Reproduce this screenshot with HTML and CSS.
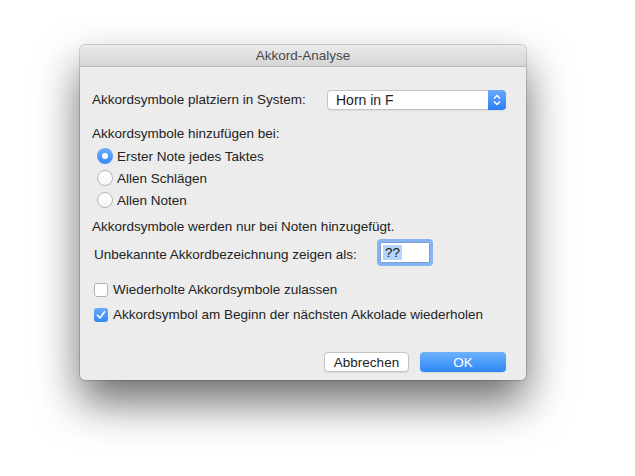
FILE: index.html
```html
<!DOCTYPE html>
<html lang="de">
<head>
    <meta charset="UTF-8">
    <title>Akkord-Analyse</title>
    <link rel="stylesheet" href="styles.css">
</head>
<body>
<div class="desk">
    <div class="win">
        <div class="titlebar">Akkord-Analyse</div>
        <div class="body">
            <div class="row row-system">
                <span>Akkordsymbole platziern in System:</span>
                <div class="popup">
                    <span class="popup-text">Horn in F</span>
                    <span class="stepper">
                        <svg width="10" height="14" viewBox="0 0 10 14">
                            <path d="M2 5.5 L5 2.5 L8 5.5 M2 8.5 L5 11.5 L8 8.5" fill="none" stroke="#fff" stroke-width="1.5"/>
                        </svg>
                    </span>
                </div>
            </div>

            <div class="line line-head">Akkordsymbole hinzufügen bei:</div>
            <ul class="radios">
                <li><em class="radio on"></em><span>Erster Note jedes Taktes</span></li>
                <li><em class="radio"></em><span>Allen Schlägen</span></li>
                <li><em class="radio"></em><span>Allen Noten</span></li>
            </ul>

            <div class="line line-note">Akkordsymbole werden nur bei Noten hinzugefügt.</div>

            <div class="row row-unknown">
                <span class="unknown-label">Unbekannte Akkordbezeichnung zeigen als:</span>
                <div class="field"><span class="sel">??</span></div>
            </div>

            <div class="check check-first"><em class="box"></em><span>Wiederholte Akkordsymbole zulassen</span></div>
            <div class="check check-second">
                <em class="box on">
                    <svg width="14" height="14" viewBox="0 0 14 14">
                        <path d="M3.5 7.2 L6 10 L10.5 3.8" fill="none" stroke="#fff" stroke-width="1.6" stroke-linecap="round" stroke-linejoin="round"/>
                    </svg>
                </em>
                <span>Akkordsymbol am Beginn der nächsten Akkolade wiederholen</span>
            </div>

            <div class="buttons">
                <button class="btn">Abbrechen</button>
                <button class="btn btn-ok">OK</button>
            </div>
        </div>
    </div>
</div>
</body>
</html>
```

FILE: styles.css
```css
* {
    margin: 0;
    padding: 0;
    box-sizing: border-box;
}

html, body {
    height: 100%;
}

body {
    background: #fff;
    font-family: "Liberation Sans", Arial, sans-serif;
    font-size: 13.5px;
    color: #232323;
}

ul, li {
    list-style: none;
}

.desk {
    min-height: 476px;
    padding: 45px 0 0 80px;
}

.win {
    width: 446px;
    height: 335px;
    background: #ececec;
    border-radius: 5px;
    box-shadow: 0 0 0 1px rgba(0, 0, 0, 0.16), 0 22px 44px rgba(0, 0, 0, 0.58);
    overflow: hidden;
}

.titlebar {
    height: 22px;
    line-height: 22px;
    text-align: center;
    color: #4a4a4a;
    background: linear-gradient(#ebebeb, #d5d5d5);
    border-bottom: 1px solid #b9b9b9;
}

.body {
    display: flex;
    flex-direction: column;
    padding: 0 20px 0 12px;
}

.row {
    display: flex;
    align-items: center;
}

.row-system {
    margin-top: 22px;
    height: 20px;
    padding-top: 1px;
}

.popup {
    margin-left: auto;
    width: 179px;
    height: 20px;
    display: flex;
    background: #fff;
    border: 1px solid #c4c4c4;
    border-radius: 4px;
    box-shadow: 0 1px 1px rgba(0, 0, 0, 0.06);
}

.popup-text {
    flex: 1;
    padding-left: 8px;
    line-height: 18px;
    font-size: 14px;
}

.stepper {
    width: 18px;
    margin: -1px -1px -1px 0;
    display: flex;
    align-items: center;
    justify-content: center;
    background: linear-gradient(#6aaafc, #2c7df7);
    border-radius: 0 4px 4px 0;
}

.line {
    height: 16px;
    line-height: 16px;
}

.line-head {
    margin-top: 17px;
}

.radios {
    margin-top: 3px;
    padding-left: 5px;
}

.radios li {
    height: 22px;
    display: flex;
    align-items: center;
}

.radio {
    width: 16px;
    height: 16px;
    margin-right: 4px;
    border-radius: 50%;
    background: linear-gradient(#fff, #f6f6f6);
    border: 1px solid #b5b5b5;
    position: relative;
}

.radio.on {
    border: none;
    background: linear-gradient(#6db0fb, #3687f8);
}

.radio.on::after {
    content: "";
    position: absolute;
    left: 5px;
    top: 5px;
    width: 6px;
    height: 6px;
    border-radius: 50%;
    background: #fff;
}

.line-note {
    margin-top: 8px;
}

.row-unknown {
    margin-top: 4px;
    height: 27px;
    padding-left: 2px;
}

.unknown-label {
    width: 283px;
    padding-top: 3px;
}

.field {
    width: 56px;
    height: 27px;
    padding: 3px 2px 2px 3px;
    border: 3px solid #86b4f3;
    border-radius: 4px;
    background: #fff;
    box-shadow: inset 0 0 0 1px #7f9ed0;
    line-height: 15px;
}

.sel {
    display: inline-block;
    background: #b3d4fd;
    padding: 0 2px;
    color: #111;
}

.check {
    display: flex;
    align-items: center;
    height: 17px;
    padding-left: 2px;
}

.check-first {
    margin-top: 15px;
}

.check-second {
    margin-top: 8px;
}

.box {
    width: 14px;
    height: 14px;
    margin-right: 5px;
    border-radius: 3px;
    background: #fff;
    border: 1px solid #b3b3b3;
    display: flex;
}

.box.on {
    border: none;
    background: linear-gradient(#6aabfb, #3486f8);
}

.buttons {
    margin-top: 29px;
    display: flex;
    justify-content: flex-end;
    gap: 11px;
}

.btn {
    height: 20px;
    font-family: inherit;
    font-size: 13.5px;
    color: #232323;
    background: #fff;
    border: 1px solid #c2c2c2;
    border-radius: 4px;
    box-shadow: 0 1px 1px rgba(0, 0, 0, 0.08);
    width: 85px;
}

.btn-ok {
    width: 86px;
    color: #fff;
    border: none;
    background: linear-gradient(#6cb2fb, #2d87f6);
}
```
